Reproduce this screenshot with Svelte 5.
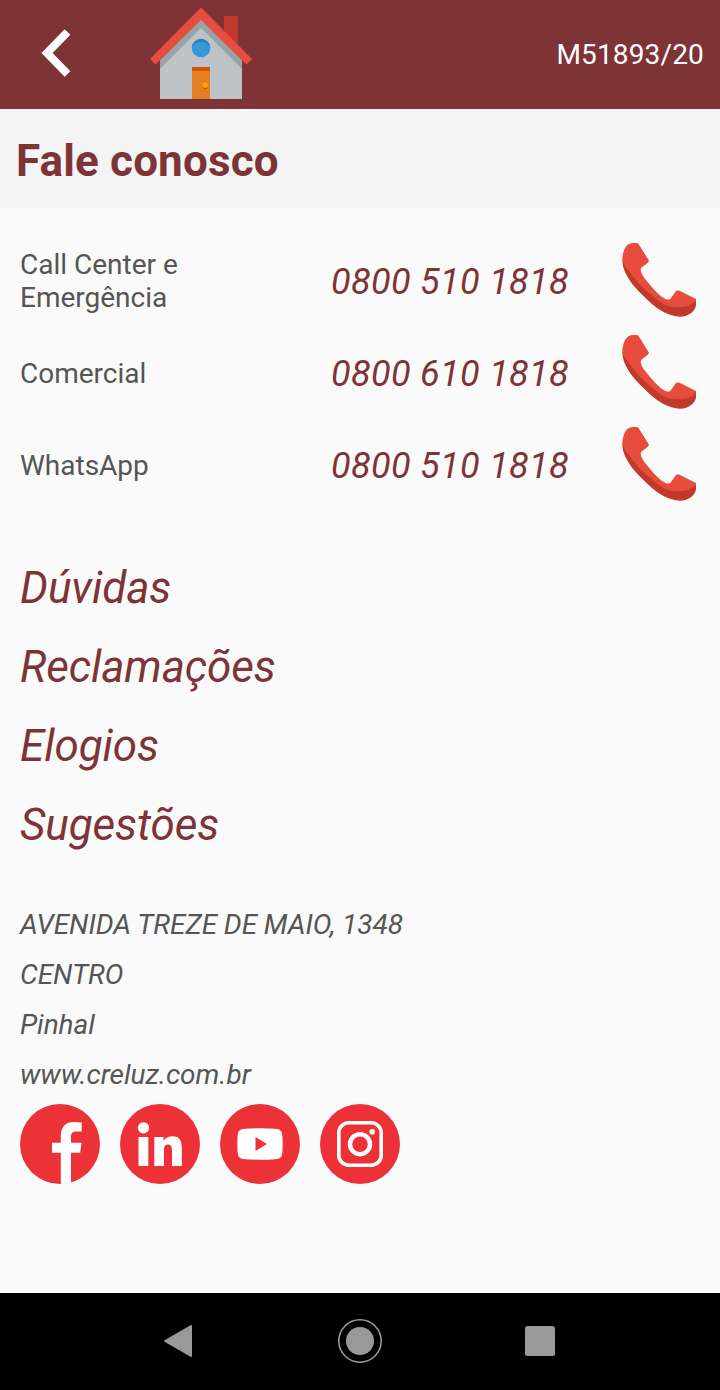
<script lang="ts">
  interface Contact {
    label: string;
    phone: string;
  }

  const contacts: Contact[] = [
    { label: 'Call Center e Emergência', phone: '0800 510 1818' },
    { label: 'Comercial', phone: '0800 610 1818' },
    { label: 'WhatsApp', phone: '0800 510 1818' },
  ];

  const links = ['Dúvidas', 'Reclamações', 'Elogios', 'Sugestões'];
  const address = ['AVENIDA TREZE DE MAIO, 1348', 'CENTRO', 'Pinhal', 'www.creluz.com.br'];
  const networks = ['facebook', 'linkedin', 'youtube', 'instagram'];
</script>

<div class="screen">
  <header>
    <svg class="back" viewBox="0 0 30 50">
      <path d="M27.500 4L7 25L27.500 46" />
    </svg>
    <svg class="house" viewBox="0 0 104 94">
      <path fill="#c0392b" d="M75 10h14v32L75 28z" />
      <path fill="#bdc3c7" d="M52 14L93 55v38H11V55z" />
      <path fill="#95a5a5" d="M52 13L93 54v9L52 22L11 63V54z" />
      <path fill="#e74c3c" d="M52 1.500L103 53L97.500 58.500L52 14L6.500 58.500L1 53z" />
      <circle cx="52" cy="42" r="9.300" fill="#3498db" />
      <path fill="#2980b9" d="M42.900 40.500a9.300 9.300 0 0 1 18.200 0a11 11 0 0 0-18.200 0z" />
      <path fill="#e67e22" d="M43 61h18v32H43z" />
      <path fill="#d35400" d="M43 61h18v4H43z" />
      <circle cx="56.500" cy="80.500" r="2.700" fill="#d35400" />
      <circle cx="56.500" cy="79.200" r="2.700" fill="#f1a80f" />
    </svg>
    <span class="code">M51893/20</span>
  </header>

  <h1>Fale conosco</h1>

  <main>
    <div class="contacts">
      {#each contacts as c}
        <div class="contact">
          <span class="label">{c.label}</span>
          <span class="phone">{c.phone}</span>
          <svg class="call" viewBox="0 0 76 76">
            <path fill="#c0392b" d="M1.300 19C1.500 24 2.500 27.500 4 31C8 40 15 48 22 54.500C28 60.500 34 66.500 42 70.800C48 74 54 75.800 59 75.700C68 75.500 74.500 70 75 64V58L58 62L40 58L12 30z" />
            <path fill="#e74c3c" d="M7.300 3.300C9.500 2.200 14 1.500 17.300 2.500L28 19.700C26 24 20.500 25 19.700 28.500C20 34 25 39 29 44C34 49.500 39 55.500 45 58.300C47 59 49 58.500 50 57L55 50Q56.300 49 58 49.600L74 57.500Q75.300 58.200 74.500 60C71 64.500 66 65.700 61 66C56 66.300 51 66.300 47 65C42 63 38 60.500 34 57C28 52 22 47 17.300 42C13 37 10 33 7.300 29C5 26 2.500 23 1.300 19.700C1.300 13 3.500 6 7.300 3.300z" />
          </svg>
        </div>
      {/each}
    </div>

    <nav>
      {#each links as link}
        <span class="link">{link}</span>
      {/each}
    </nav>

    <address>
      {#each address as line}
        <span>{line}</span>
      {/each}
    </address>

    <div class="social">
      {#each networks as name}
        <svg viewBox="0 0 80 80">
          <circle cx="40" cy="40" r="40" fill="#ed3237" />
          {#if name === 'facebook'}
            <path fill="#fff" d="M40.800 79.900V48.700H32V38.800h8.800v-6.500C40.800 22.500 46 18 53.500 18c3.500 0 6.200.3 8.200.6v9h-5.500c-4 0-5.200 2.200-5.200 5.200v6h10.500l-1.300 9.900H51v30q-5.500 1.200-10.200 1.200z" />
          {:else if name === 'linkedin'}
            <circle cx="23.500" cy="23.800" r="5.600" fill="#fff" />
            <path fill="#fff" d="M18.500 33h9.800v29h-9.800z" />
            <path fill="#fff" d="M34.300 33h9.200v4c2-3.200 5.200-4.700 9-4.700 7.200 0 9.300 4.700 9.300 12V62H52V47c0-4-.8-6.500-4-6.500s-4.100 2.800-4.100 6.500v15h-9.600z" />
          {:else if name === 'youtube'}
            <path fill="#fff" d="M25 24.800Q40 23.700 55 24.800C60 25 62 27 62.300 31.500Q63 40 62.300 48.500C62 53 60 55 55 55.200Q40 56.200 25 55.200C20 55 18 53 17.700 48.500Q17 40 17.700 31.500C18 27 20 25 25 24.800z" />
            <path fill="#ed3237" d="M35.500 33L47 40L35.500 47z" />
          {:else}
            <rect class="outline" x="18.800" y="18.800" width="42.400" height="42.400" rx="10" />
            <circle class="lens" cx="40" cy="40.200" r="10" />
            <circle cx="52.200" cy="27.700" r="2.800" fill="#fff" />
          {/if}
        </svg>
      {/each}
    </div>
  </main>

  <footer>
    <svg viewBox="0 0 48 48">
      <path class="triangle" d="M9 24L35 9v30z" />
    </svg>
    <svg viewBox="0 0 48 48">
      <circle class="ring" cx="24" cy="24" r="21.200" />
      <circle cx="24" cy="24" r="14" fill="#999" />
    </svg>
    <svg viewBox="0 0 48 48">
      <rect x="9" y="9" width="30" height="30" rx="2.500" fill="#999" />
    </svg>
  </footer>
</div>

<style>
  :global(body) {
    margin: 0;
    background: #fafafa;
  }
  .screen {
    display: flex;
    flex-direction: column;
    width: 720px;
    height: 1390px;
    background: #fafafa;
    color: #555;
    font-family: Roboto, sans-serif;
    font-size: 28px;
  }
  svg { display: block; flex-shrink: 0; }

  header {
    display: flex;
    align-items: center;
    height: 109px;
    padding: 0 16px 0 40px;
    box-sizing: border-box;
    background: #7e3437;
    color: #fff;
  }
  .back { width: 30px; height: 50px; margin-top: -3px; overflow: visible; }
  .back path { fill: none; stroke: #fff; stroke-width: 8; }
  .house {
    width: 104px;
    height: 94px;
    margin: -3px 0 0 79px;
  }
  .code { margin-left: auto; letter-spacing: 0.15px; }

  h1 {
    display: flex;
    align-items: center;
    height: 99px;
    margin: 0;
    padding: 4px 16px 0;
    box-sizing: border-box;
    background: #f4f4f4;
    color: #7e3437;
    font-size: 44px;
    font-weight: 700;
    letter-spacing: 0.15px;
  }

  main { flex: 1; padding: 27px 20px 0; }
  .contact {
    display: flex;
    align-items: center;
    height: 92px;
  }
  .label { width: 190px; }
  .phone {
    margin: 2px 0 0 121px;
    color: #7e3437;
    font-size: 36px;
    font-style: italic;
    letter-spacing: 0.35px;
    white-space: nowrap;
  }
  .call {
    width: 76px;
    height: 76px;
    margin: -4px 3px 0 auto;
  }

  nav {
    display: flex;
    flex-direction: column;
    margin-top: 38px;
  }
  .link {
    color: #7e3437;
    font-size: 44px;
    font-style: italic;
    letter-spacing: -0.1px;
    line-height: 79px;
  }

  address {
    display: flex;
    flex-direction: column;
    margin-top: 35px;
    font-style: italic;
    letter-spacing: -0.05px;
    line-height: 50px;
  }

  .social {
    display: flex;
    gap: 20px;
    margin-top: 4px;
  }
  .social svg { width: 80px; height: 80px; }
  .outline { fill: none; stroke: #fff; stroke-width: 3.6; }
  .lens { fill: none; stroke: #fff; stroke-width: 4.4; }

  footer {
    display: flex;
    align-items: center;
    justify-content: center;
    gap: 132px;
    height: 97px;
    padding-bottom: 1px;
    box-sizing: border-box;
    background: #000;
  }
  footer svg { width: 48px; height: 48px; }
  .triangle { fill: #999; stroke: #999; stroke-width: 2; stroke-linejoin: round; }
  .ring { fill: none; stroke: #999; stroke-width: 1.6; }
</style>
